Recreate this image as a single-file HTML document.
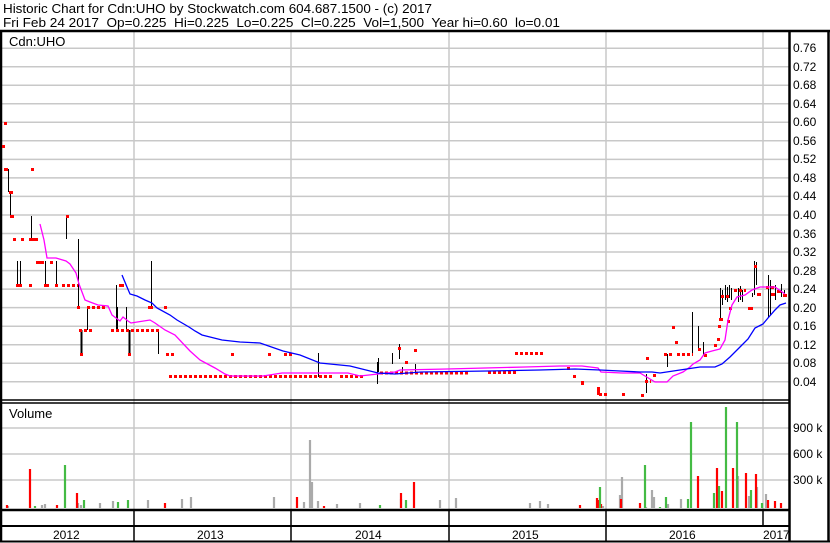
<!DOCTYPE html>
<html><head><meta charset="utf-8"><style>
html,body{margin:0;padding:0;background:#fff}
svg{display:block}
text{font-family:"Liberation Sans",Arial,sans-serif;font-size:12px;fill:#000}
.t{font-size:13px}
</style></head><body>
<svg width="830" height="543" viewBox="0 0 830 543" xmlns="http://www.w3.org/2000/svg">
<rect width="830" height="543" fill="#fff"/>
<text class="t" x="3" y="13" textLength="429" lengthAdjust="spacingAndGlyphs">Historic Chart for Cdn:UHO by Stockwatch.com 604.687.1500 - (c) 2017</text>
<text class="t" x="3" y="27" xml:space="preserve" textLength="557" lengthAdjust="spacingAndGlyphs">Fri Feb 24 2017  Op=0.225  Hi=0.225  Lo=0.225  Cl=0.225  Vol=1,500  Year hi=0.60  lo=0.01</text>
<!-- grid -->
<g stroke="#c8c8c8" stroke-width="1.5" fill="none">
<path d="M0 48.2H790M0 66.7H790M0 85.2H790M0 103.8H790M0 122.3H790M0 140.8H790M0 159.4H790M0 177.9H790M0 196.4H790M0 215H790M0 233.5H790M0 252H790M0 270.6H790M0 289.1H790M0 307.6H790M0 326.2H790M0 344.7H790M0 363.2H790M0 381.7H790"/>
<path d="M134 31V510M291 31V510M449 31V510M606 31V510M763 31V510"/>
<path d="M0 428H790M0 454H790M0 480H790"/>
</g>
<!-- frame -->
<g stroke="#000" fill="none">
<path d="M0 31H830" stroke-width="2.5"/>
<path d="M1 31V542" stroke-width="2.5"/>
<path d="M828.5 31V542" stroke-width="2.5"/>
<path d="M789.5 31V542" stroke-width="2.5"/>
<path d="M0 400H790M0 403H790" stroke-width="1.5"/>
<path d="M0 510H790" stroke-width="2.5"/>
<path d="M0 526H790" stroke-width="2"/>
<path d="M0 541.5H830" stroke-width="2"/>
<path d="M134 510V541M291 510V541M449 510V541M606 510V541M763 510V526" stroke-width="1.5"/>
</g>
<text class="t" x="9" y="46">Cdn:UHO</text>
<text class="t" x="9" y="418">Volume</text>
<g class="t">
<text x="793" y="52">0.76</text><text x="793" y="71">0.72</text><text x="793" y="89">0.68</text><text x="793" y="108">0.64</text><text x="793" y="126">0.60</text><text x="793" y="145">0.56</text><text x="793" y="163">0.52</text><text x="793" y="182">0.48</text><text x="793" y="200">0.44</text><text x="793" y="219">0.40</text><text x="793" y="238">0.36</text><text x="793" y="256">0.32</text><text x="793" y="275">0.28</text><text x="793" y="293">0.24</text><text x="793" y="312">0.20</text><text x="793" y="330">0.16</text><text x="793" y="349">0.12</text><text x="793" y="367">0.08</text><text x="793" y="386">0.04</text>
<text x="793" y="432">900 k</text><text x="793" y="458">600 k</text><text x="793" y="484">300 k</text>
<text x="53" y="539">2012</text><text x="197" y="539">2013</text><text x="355" y="539">2014</text><text x="512" y="539">2015</text><text x="669" y="539">2016</text><text x="763" y="539">2017</text>
</g>
<!-- price high-low bars -->
<g stroke="#000" stroke-width="1" fill="none" transform="translate(0.5,0)">
<path d="M8 169V192M10 192V216M31 216V239M66 216V239M17 261V285M20 261V285M45 261V285M56 261V285M78 239V307M87 307V330M116 285V330M117 307V330M126 307V330M151 261V307M158 330V354M318 353V377M377 362V384M378 358V372M392 353V364M399 344V359M402 367V372M415 364V373M646 374V393M667 354V367M692 312V353M698 326V350M703 342V355M720 288V320M722 290V305M725 285V300M727 287V302M729 285V298M731 288V300M738 288V302M740 286V300M742 290V302M752 293V297M754 261V295M756 262V285M768 275V318M770 280V315M775 285V300M781 284V297M784 290V296"/>
<path d="M81 330V354M129 330V354" stroke-width="2"/>
</g>
<!-- price ticks -->
<g fill="#f00">
<rect x="4" y="122" width="3" height="3"/><rect x="2" y="145" width="3" height="3"/><rect x="4" y="168" width="4" height="3"/><rect x="31" y="168" width="3" height="3"/><rect x="9" y="191" width="4" height="3"/><rect x="10" y="215" width="4" height="3"/><rect x="13" y="238" width="3" height="3"/><rect x="21" y="238" width="3" height="3"/><rect x="29" y="238" width="9" height="3"/><rect x="66" y="215" width="3" height="3"/><rect x="36" y="261" width="8" height="3"/><rect x="50" y="261" width="3" height="3"/><rect x="16" y="284" width="6" height="3"/><rect x="29" y="284" width="3" height="3"/><rect x="44" y="284" width="5" height="3"/><rect x="55" y="284" width="3" height="3"/><rect x="77" y="306" width="3" height="3"/><rect x="119" y="284" width="5" height="3"/><rect x="148" y="306" width="5" height="3"/><rect x="164" y="306" width="3" height="3"/><rect x="80" y="353" width="3" height="3"/><rect x="128" y="353" width="3" height="3"/><rect x="166" y="353" width="3" height="3"/><rect x="171" y="353" width="3" height="3"/><rect x="231" y="353" width="3" height="3"/><rect x="268" y="353" width="3" height="3"/><rect x="405" y="361" width="3" height="3"/><rect x="414" y="349" width="3" height="3"/><rect x="398" y="347" width="3" height="3"/><rect x="567" y="367" width="3" height="3"/><rect x="573" y="375" width="3" height="3"/><rect x="581" y="381" width="3" height="4"/><rect x="597" y="387" width="3" height="8"/><rect x="622" y="393" width="3" height="3"/><rect x="641" y="394" width="3" height="3"/><rect x="646" y="357" width="3" height="3"/><rect x="653" y="374" width="3" height="3"/><rect x="672" y="326" width="3" height="3"/><rect x="675" y="341" width="3" height="3"/><rect x="698" y="348" width="3" height="3"/><rect x="714" y="344" width="3" height="3"/><rect x="717" y="338" width="3" height="3"/><rect x="718" y="325" width="3" height="3"/><rect x="719" y="318" width="4" height="3"/><rect x="727" y="320" width="3" height="3"/><rect x="729" y="307" width="3" height="3"/><rect x="748" y="307" width="5" height="3"/><rect x="754" y="265" width="3" height="3"/><rect x="757" y="293" width="4" height="3"/><rect x="771" y="293" width="4" height="3"/><rect x="777" y="290" width="4" height="3"/><rect x="783" y="294" width="4" height="3"/>
</g>
<g stroke="#f00" stroke-width="3" stroke-dasharray="3 2" fill="none">
<path d="M62 285.5H78M87 307.5H107M111 330.5H161M79 330.5H93M284 354.5H292M169 376.5H333M340 376.5H364M380 373H470M488 372.5H518M515 353.5H545M599 394.5H607M645 381.5H651M664 354.5H672M677 354.5H693M704 355.5H709M721 296.5H731M734 290.5H746M766 287.5H774"/>
</g>
<!-- moving averages -->
<polyline fill="none" stroke="#f0f" stroke-width="1.3" points="40,224 44,240 47,258 56,258 66,261 70,264 76,273 79,284 82,292 85,300 90,302 98,305 108,306 112,315 120,321 123,317 128,321 131,323 150,320 155,323 165,330 175,335 190,351 200,360 215,368 225,374 230,376 263,376 282,373 348,373 360,376 378,374 395,372 400,370 447,369 485,368 525,367 560,366 582,366 598,368 601,372 622,373 640,373 650,379 655,382 667,382 673,376 683,372 690,367 693,364 700,360 705,353 712,351 720,349 725,340 728,320 732,305 737,297 745,295 752,290 760,287 775,287 785,294"/>
<polyline fill="none" stroke="#00f" stroke-width="1.3" points="122,275 127,287 130,294 137,296 145,300 152,303 157,308 170,315 177,320 189,327 195,331 202,335 210,337 222,340 240,342 260,343 283,351 300,355 320,363 350,366 378,373 395,374 421,372 488,371 540,370 575,369 600,370 620,371 640,372 652,372 660,373 680,370 700,367 715,367 722,364 730,357 740,347 748,339 755,328 763,324 768,318 775,310 780,305 786,303"/>
<!-- volume bars -->
<g stroke-width="2.2">
<path stroke="#aaa" d="M8 508V506M42 508V505M45 508V504M78 508V503M81 508V505M100 508V503M113 508V501M148 508V500M182 508V499M191 508V497M274 508V497M304 508V502M310 508V440M312 508V482M318 508V501M337 508V504M360 508V503M401 508V499M440 508V500M456 508V498M530 508V503M540 508V501M548 508V504M603 508V506M620 508V495M622 508V477M624 508V508M646 508V507M652 508V490M654 508V497M668 508V504M681 508V499M738 508V476M749 508V496M757 508V487M766 508V494"/>
<path stroke="#f00" d="M7 508V505M30 508V469M57 508V505M77 508V493M165 508V503M297 508V497M324 508V506M401 508V493M414 508V482M580 508V505M597 508V498M599 508V500M601 508V504M621 508V499M640 508V503M698 508V476M717 508V468M722 508V491M733 508V468M746 508V473M756 508V474M768 508V500M775 508V501M781 508V503"/>
<path stroke="#4b4" d="M35 508V506M65 508V465M84 508V500M118 508V502M128 508V500M380 508V505M406 508V500M600 508V487M645 508V465M660 508V507M666 508V497M684 508V508M688 508V499M691 508V422M714 508V493M719 508V486M726 508V407M737 508V422M751 508V490M762 508V503"/>
</g>
</svg>
</body></html>
